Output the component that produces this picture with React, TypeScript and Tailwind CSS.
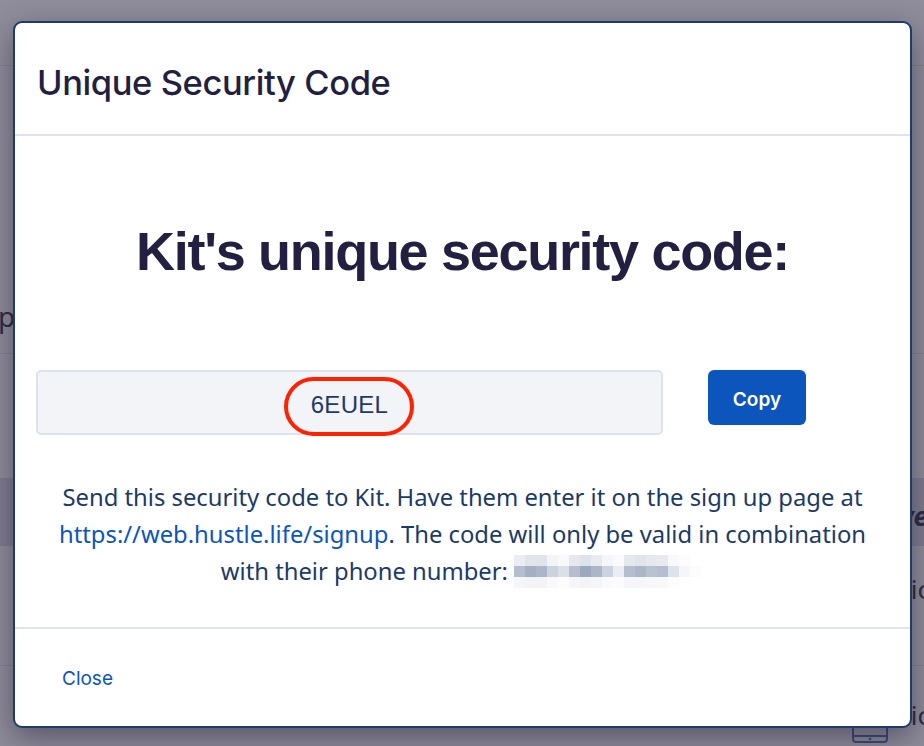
import React from 'react'

// pixelated phone number (blurred in the original)
const mosaic = [
  [0.12, 0.18, 0.18, 0.08, 0.04, 0.16, 0.2, 0.14, 0.06, 0.03, 0.16, 0.18, 0.16, 0.14, 0.04, 0.02, 0.0],
  [0.45, 0.55, 0.5, 0.3, 0.22, 0.45, 0.6, 0.5, 0.3, 0.12, 0.45, 0.5, 0.42, 0.45, 0.2, 0.06, 0.02],
  [0.06, 0.08, 0.08, 0.04, 0.02, 0.06, 0.08, 0.06, 0.03, 0.02, 0.06, 0.06, 0.05, 0.05, 0.02, 0.0, 0.0],
]

const PhoneMosaic = () => (
  <svg width="190" height="33" viewBox="0 0 190 33" className="inline-block align-middle -mt-[4px]">
    {mosaic.map((row, r) =>
      row.map((o, c) => (
        <rect key={`${r}-${c}`} x={c * 11} y={r * 11} width="11" height="11" fill="#5b6d92" fillOpacity={o} />
      ))
    )}
  </svg>
)

const Background = () => (
  <div className="w-full h-full bg-[#8f8d9b] font-['Noto_Sans',sans-serif] text-[#2d2c45]">
    <div className="h-[66px] border-b border-[#83818f]" />
    <div className="h-[288px] border-b border-[#83818f] flex items-start pt-[236px]">
      <span className="text-[28px] leading-none -ml-[2px]">p</span>
    </div>
    <div className="h-[124px]" />
    <div className="h-[68px] bg-[#7f7d8f] flex justify-end items-center pt-[8px]">
      <span className="text-[26px] font-bold italic leading-none -mr-[4px]">ve</span>
    </div>
    <div className="h-[120px] border-b border-[#83818f] flex justify-end pt-[30px]">
      <span className="text-[26px] leading-none -mr-[6px]">ic</span>
    </div>
    <div className="h-[80px] flex justify-between pt-[36px]">
      <span />
      <div className="flex items-start gap-[22px] -mr-[6px]">
        <svg width="38" height="30" viewBox="0 0 38 30" className="mt-[22px]">
          <rect x="2" y="-10" width="34" height="28" rx="3" fill="none" stroke="#3d4c78" strokeWidth="2" />
          <line x1="2" y1="12" x2="36" y2="12" stroke="#3d4c78" strokeWidth="2" />
          <circle cx="19" cy="15" r="1.3" fill="#3d4c78" />
        </svg>
        <span className="text-[26px] leading-none">ic</span>
      </div>
    </div>
  </div>
)

export default function App() {
  return (
    <div className="relative w-[924px] h-[746px] overflow-hidden">
      <Background />

      {/* Modal */}
      <div className="absolute top-[21px] left-[13px] w-[899px] h-[707px] bg-white border-2 border-[#1f3b6b] rounded-[9px] shadow-[0_10px_30px_rgba(20,18,40,0.45)] flex flex-col">
        <div className="h-[113px] flex items-center px-[22px] border-b-2 border-[#dfe3ee]">
          <h2 className="font-['Inter',sans-serif] font-medium text-[34.5px] text-[#231f40] tracking-[-0.4px] leading-none mt-[10px]">
            Unique Security Code
          </h2>
        </div>

        <div className="flex-1 flex flex-col pt-[84px]">
          <h1 className="text-center font-['Liberation_Sans',sans-serif] font-bold text-[54px] leading-[62px] tracking-[-1.3px] text-[#231f40]">
            Kit's unique security code:
          </h1>

          <div className="flex items-start gap-[45px] pl-[21px] mt-[88px]">
            <div className="relative w-[627px] h-[65px] bg-[#f3f4f8] border-2 border-[#dde2ef] rounded-[5px] flex items-center justify-center">
              <span className="font-['Liberation_Sans',sans-serif] text-[24px] text-[#1f3a6a] tracking-[0.3px] mt-[4px]">6EUEL</span>
              <div className="absolute left-[246px] top-[5px] w-[130px] h-[59px] rounded-full border-[4px] border-[#ff2200]" />
            </div>
            <button className="w-[98px] h-[55px] pt-[5px] bg-[#0b55bd] rounded-[6px] text-white font-['Inter',sans-serif] font-semibold text-[19px]">
              Copy
            </button>
          </div>

          <p className="mt-[44px] px-[36px] text-center font-['Noto_Sans',sans-serif] text-[23.8px] leading-[37px] text-[#1c3a66]">
            Send this security code to Kit. Have them enter it on the sign up page at{' '}
            <a className="text-[#0b55bd]">https://web.hustle.life/signup</a>. The code will only be valid in combination
            with their phone number: <PhoneMosaic />
          </p>
        </div>

        <div className="h-[99px] border-t-2 border-[#dfe3ee] flex items-center pl-[47px]">
          <button className="font-['Inter',sans-serif] text-[19px] text-[#0b55bd] mt-[4px]">Close</button>
        </div>
      </div>
    </div>
  )
}
